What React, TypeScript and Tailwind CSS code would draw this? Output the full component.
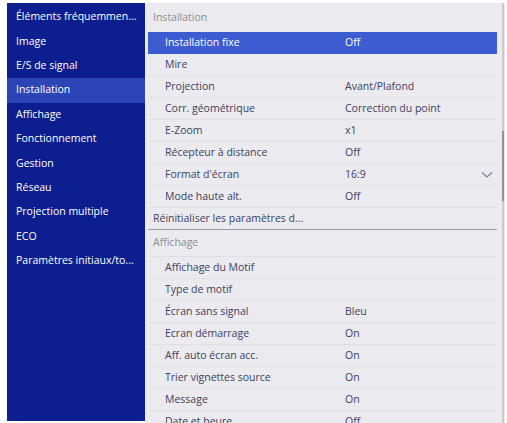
import React from "react";

const menu = [
  "Éléments fréquemmen...",
  "Image",
  "E/S de signal",
  "Installation",
  "Affichage",
  "Fonctionnement",
  "Gestion",
  "Réseau",
  "Projection multiple",
  "ECO",
  "Paramètres initiaux/to...",
];

type Row = { label: string; value?: string; active?: boolean; chevron?: boolean };

const installRows: Row[] = [
  { label: "Installation fixe", value: "Off", active: true },
  { label: "Mire" },
  { label: "Projection", value: "Avant/Plafond" },
  { label: "Corr. géométrique", value: "Correction du point" },
  { label: "E-Zoom", value: "x1" },
  { label: "Récepteur à distance", value: "Off" },
  { label: "Format d'écran", value: "16:9", chevron: true },
  { label: "Mode haute alt.", value: "Off" },
];

const displayRows: Row[] = [
  { label: "Affichage du Motif" },
  { label: "Type de motif" },
  { label: "Écran sans signal", value: "Bleu" },
  { label: "Ecran démarrage", value: "On" },
  { label: "Aff. auto écran acc.", value: "On" },
  { label: "Trier vignettes source", value: "On" },
  { label: "Message", value: "On" },
  { label: "Date et heure", value: "Off" },
];

function SettingRow({ row }: { row: Row }) {
  return (
    <div
      className={
        "flex items-center h-[22px] shrink-0 mx-[3px] border-b " +
        (row.active
          ? "bg-[#3d5cd2] text-white border-[#3d5cd2]"
          : "text-[#3b4160] border-[#dedee4]")
      }
    >
      <div className="w-[197px] pl-[17px] whitespace-nowrap">{row.label}</div>
      <div className="flex-1 whitespace-nowrap">{row.value}</div>
      {row.chevron && (
        <svg width="12" height="8" viewBox="0 0 12 8" className="mr-[4px] text-[#7b8098]">
          <path d="M1 1.5 L6 6 L11 1.5" fill="none" stroke="currentColor" strokeWidth="1.3" />
        </svg>
      )}
    </div>
  );
}

export default function App() {
  return (
    <div
      className="w-[507px] h-[423px] bg-white pt-[3px] pl-[7px] overflow-hidden flex text-[10.5px]"
      style={{ fontFamily: '"Open Sans", "Noto Sans", sans-serif' }}
    >
      {/* category list */}
      <div className="w-[138px] h-[418px] bg-[#0d1e8e] pt-[2px] flex flex-col shrink-0">
        {menu.map((m) => (
          <div
            key={m}
            className={
              "h-[24.4px] flex items-center pl-[9px] text-white whitespace-nowrap " +
              (m === "Installation" ? "bg-[#2b44b6]" : "")
            }
          >
            {m}
          </div>
        ))}
      </div>

      {/* settings list */}
      <div className="w-[355px] h-[420px] bg-[#ebebef] flex flex-col overflow-hidden">
        <div className="h-[29px] shrink-0 flex items-center pl-[8px] text-[#8a8c96]">Installation</div>
        {installRows.map((r) => (
          <SettingRow key={r.label} row={r} />
        ))}
        <div className="h-[22px] shrink-0 mx-[3px] flex items-center pl-[5px] text-[#3b4160] border-b border-[#9a9ca6] whitespace-nowrap">
          Réinitialiser les paramètres d...
        </div>
        <div className="h-[27px] shrink-0 flex items-center pl-[8px] text-[#8a8c96] border-b border-[#dedee4] mx-[3px]">
          <span className="-ml-[3px]">Affichage</span>
        </div>
        {displayRows.map((r) => (
          <SettingRow key={r.label} row={r} />
        ))}
      </div>

      {/* scrollbar */}
      <div className="w-[5px] h-[420px] bg-[#ebebef] flex justify-center shrink-0">
        <div className="w-[2px] h-full bg-[#c9c9cf] flex flex-col">
          <div className="h-[128px]" />
          <div className="h-[70px] bg-[#8f9098]" />
        </div>
      </div>
    </div>
  );
}
